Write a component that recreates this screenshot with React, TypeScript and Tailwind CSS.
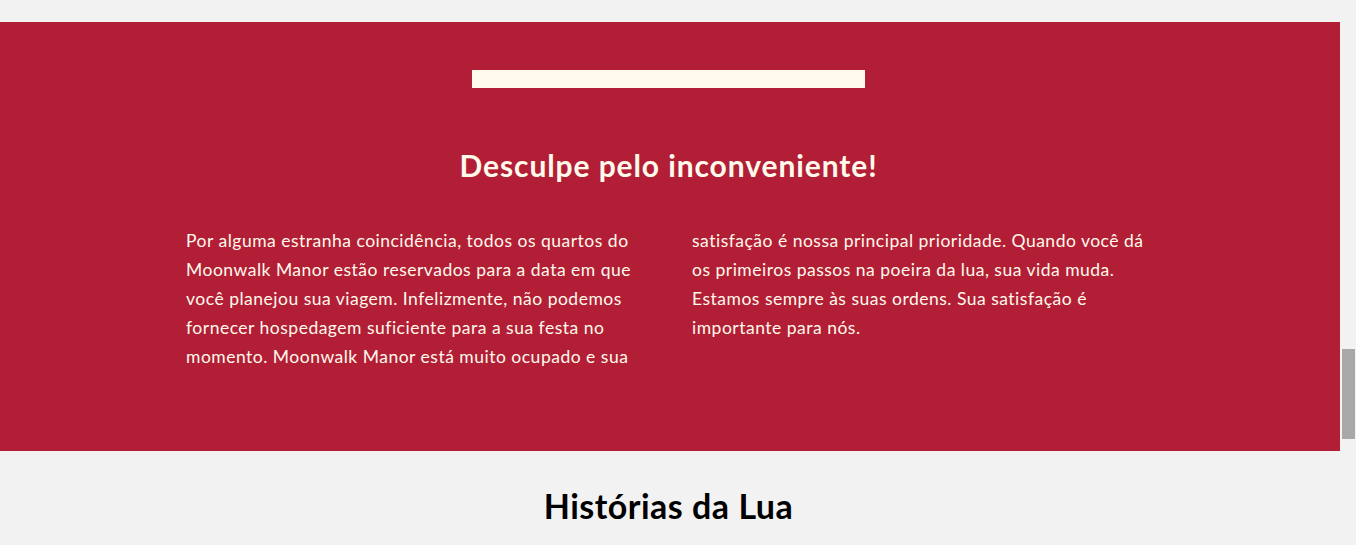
import React from 'react';

const leftLines = [
  'Por alguma estranha coincidência, todos os quartos do',
  'Moonwalk Manor estão reservados para a data em que',
  'você planejou sua viagem. Infelizmente, não podemos',
  'fornecer hospedagem suficiente para a sua festa no',
  'momento. Moonwalk Manor está muito ocupado e sua',
];

const rightLines = [
  'satisfação é nossa principal prioridade. Quando você dá',
  'os primeiros passos na poeira da lua, sua vida muda.',
  'Estamos sempre às suas ordens. Sua satisfação é',
  'importante para nós.',
];

const TextColumn: React.FC<{ lines: string[] }> = ({ lines }) => (
  <p className="text-[17.5px] leading-[29px] tracking-[0.5px] text-[#fffaeb]">
    {lines.map((line) => (
      <span key={line} className="block whitespace-nowrap">
        {line}
      </span>
    ))}
  </p>
);

const App: React.FC = () => {
  return (
    <div
      className="flex h-[545px] overflow-hidden bg-[#f2f2f2]"
      style={{ fontFamily: 'Lato, "Noto Sans", sans-serif' }}
    >
      <main className="w-[1340px] shrink-0 pt-[22px]">
        {/* Sold out notice */}
        <section className="bg-[#b31e37] pt-[48px] pb-[80px]">
          <div className="w-[1337px]">
            <div className="mx-auto h-[18px] w-[393px] bg-[#fffaeb]" />
            <h2 className="mt-[59px] text-center text-[30px] font-bold leading-[36px] tracking-[0.9px] text-[#fffaeb]">
              Desculpe pelo inconveniente!
            </h2>
          </div>
          <div className="mt-[43px] grid grid-cols-[466px_466px] gap-x-[40px] pl-[186px]">
            <TextColumn lines={leftLines} />
            <TextColumn lines={rightLines} />
          </div>
        </section>

        <h2 className="mt-[35px] w-[1337px] text-center text-[34px] font-bold leading-[40px] tracking-[0.5px] text-black">
          Histórias da Lua
        </h2>
      </main>

      {/* Scrollbar */}
      <div className="w-[16px] shrink-0 bg-[#f2f2f2] pl-[2px] pt-[349px]">
        <div className="h-[90px] w-[13px] bg-[#a8a8a8]" />
      </div>
    </div>
  );
};

export default App;
